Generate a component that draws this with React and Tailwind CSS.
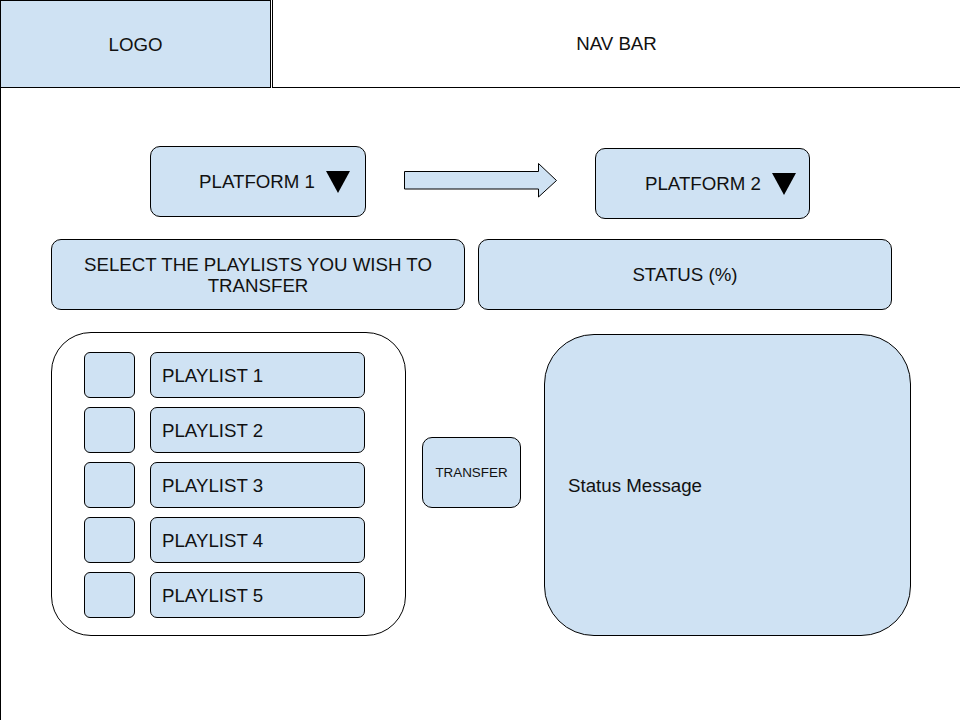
const playlists = ['PLAYLIST 1', 'PLAYLIST 2', 'PLAYLIST 3', 'PLAYLIST 4', 'PLAYLIST 5'];

const Caret = () => (
  <svg width="24" height="22" viewBox="0 0 24 22">
    <polygon points="0,0 24,0 12,22" fill="#000" />
  </svg>
);

const App = () => {
  return (
    <div className="w-[960px] h-[720px] border-l border-black bg-white text-[#111] font-['Liberation_Sans',Arial,sans-serif] text-[18.7px] overflow-hidden">
      {/* Header */}
      <div className="flex h-[88px]">
        <div className="w-[271px] h-[88px] -ml-px border border-black bg-[#cfe2f3] flex items-center justify-center pt-[2px]">
          LOGO
        </div>
        <div className="flex-1 ml-[1px] h-[88px] border-l border-b border-black flex items-center justify-center pt-[2px]">
          NAV BAR
        </div>
      </div>

      {/* Platforms */}
      <div className="flex items-start h-[72px] mt-[58px]">
        <div className="ml-[149px] w-[216px] h-[71px] rounded-[10px] border border-black bg-[#cfe2f3] flex items-center justify-end pr-[15px] gap-[11px]">
          <span className="pt-[2px]">PLATFORM 1</span>
          <Caret />
        </div>
        <svg className="ml-[38px] mt-[17px]" width="154" height="35" viewBox="0 0 154 35">
          <polygon
            points="0.5,8.5 134.5,8.5 134.5,0.5 152.5,17.5 134.5,34 134.5,26 0.5,26"
            fill="#cfe2f3"
            stroke="#000"
            strokeWidth="1"
          />
        </svg>
        <div className="ml-[37px] mt-[2px] w-[215px] h-[71px] rounded-[10px] border border-black bg-[#cfe2f3] flex items-center pl-[49px] gap-[11px]">
          <span className="pt-[2px]">PLATFORM 2</span>
          <Caret />
        </div>
      </div>

      {/* Labels */}
      <div className="flex mt-[21px] ml-[50px] gap-[13px]">
        <div className="w-[414px] h-[71px] rounded-[10px] border border-black bg-[#cfe2f3] flex items-center justify-center text-center leading-[21px] px-4">
          SELECT THE PLAYLISTS YOU WISH TO TRANSFER
        </div>
        <div className="w-[414px] h-[71px] rounded-[10px] border border-black bg-[#cfe2f3] flex items-center justify-center pt-[2px]">
          STATUS (%)
        </div>
      </div>

      {/* Body */}
      <div className="flex items-start mt-[22px]">
        <div className="ml-[50px] w-[355px] h-[304px] rounded-[40px] border border-black bg-white pt-[19px] pl-[32px] flex flex-col gap-[9px]">
          {playlists.map((name) => (
            <div key={name} className="flex gap-[15px]">
              <div className="w-[51px] h-[46px] rounded-[6px] border border-black bg-[#cfe2f3]" />
              <div className="w-[215px] h-[46px] rounded-[7px] border border-black bg-[#cfe2f3] flex items-center pl-[11px] pt-[2px]">
                {name}
              </div>
            </div>
          ))}
        </div>

        <button className="ml-[16px] mt-[105px] w-[99px] h-[71px] rounded-[10px] border border-black bg-[#cfe2f3] text-[13.4px] flex items-center justify-center pt-[2px]">
          TRANSFER
        </button>

        <div className="ml-[23px] mt-[2px] w-[367px] h-[302px] rounded-[50px] border border-black bg-[#cfe2f3] flex items-center pl-[23px] pt-[2px]">
          Status Message
        </div>
      </div>
    </div>
  );
};

export default App;
